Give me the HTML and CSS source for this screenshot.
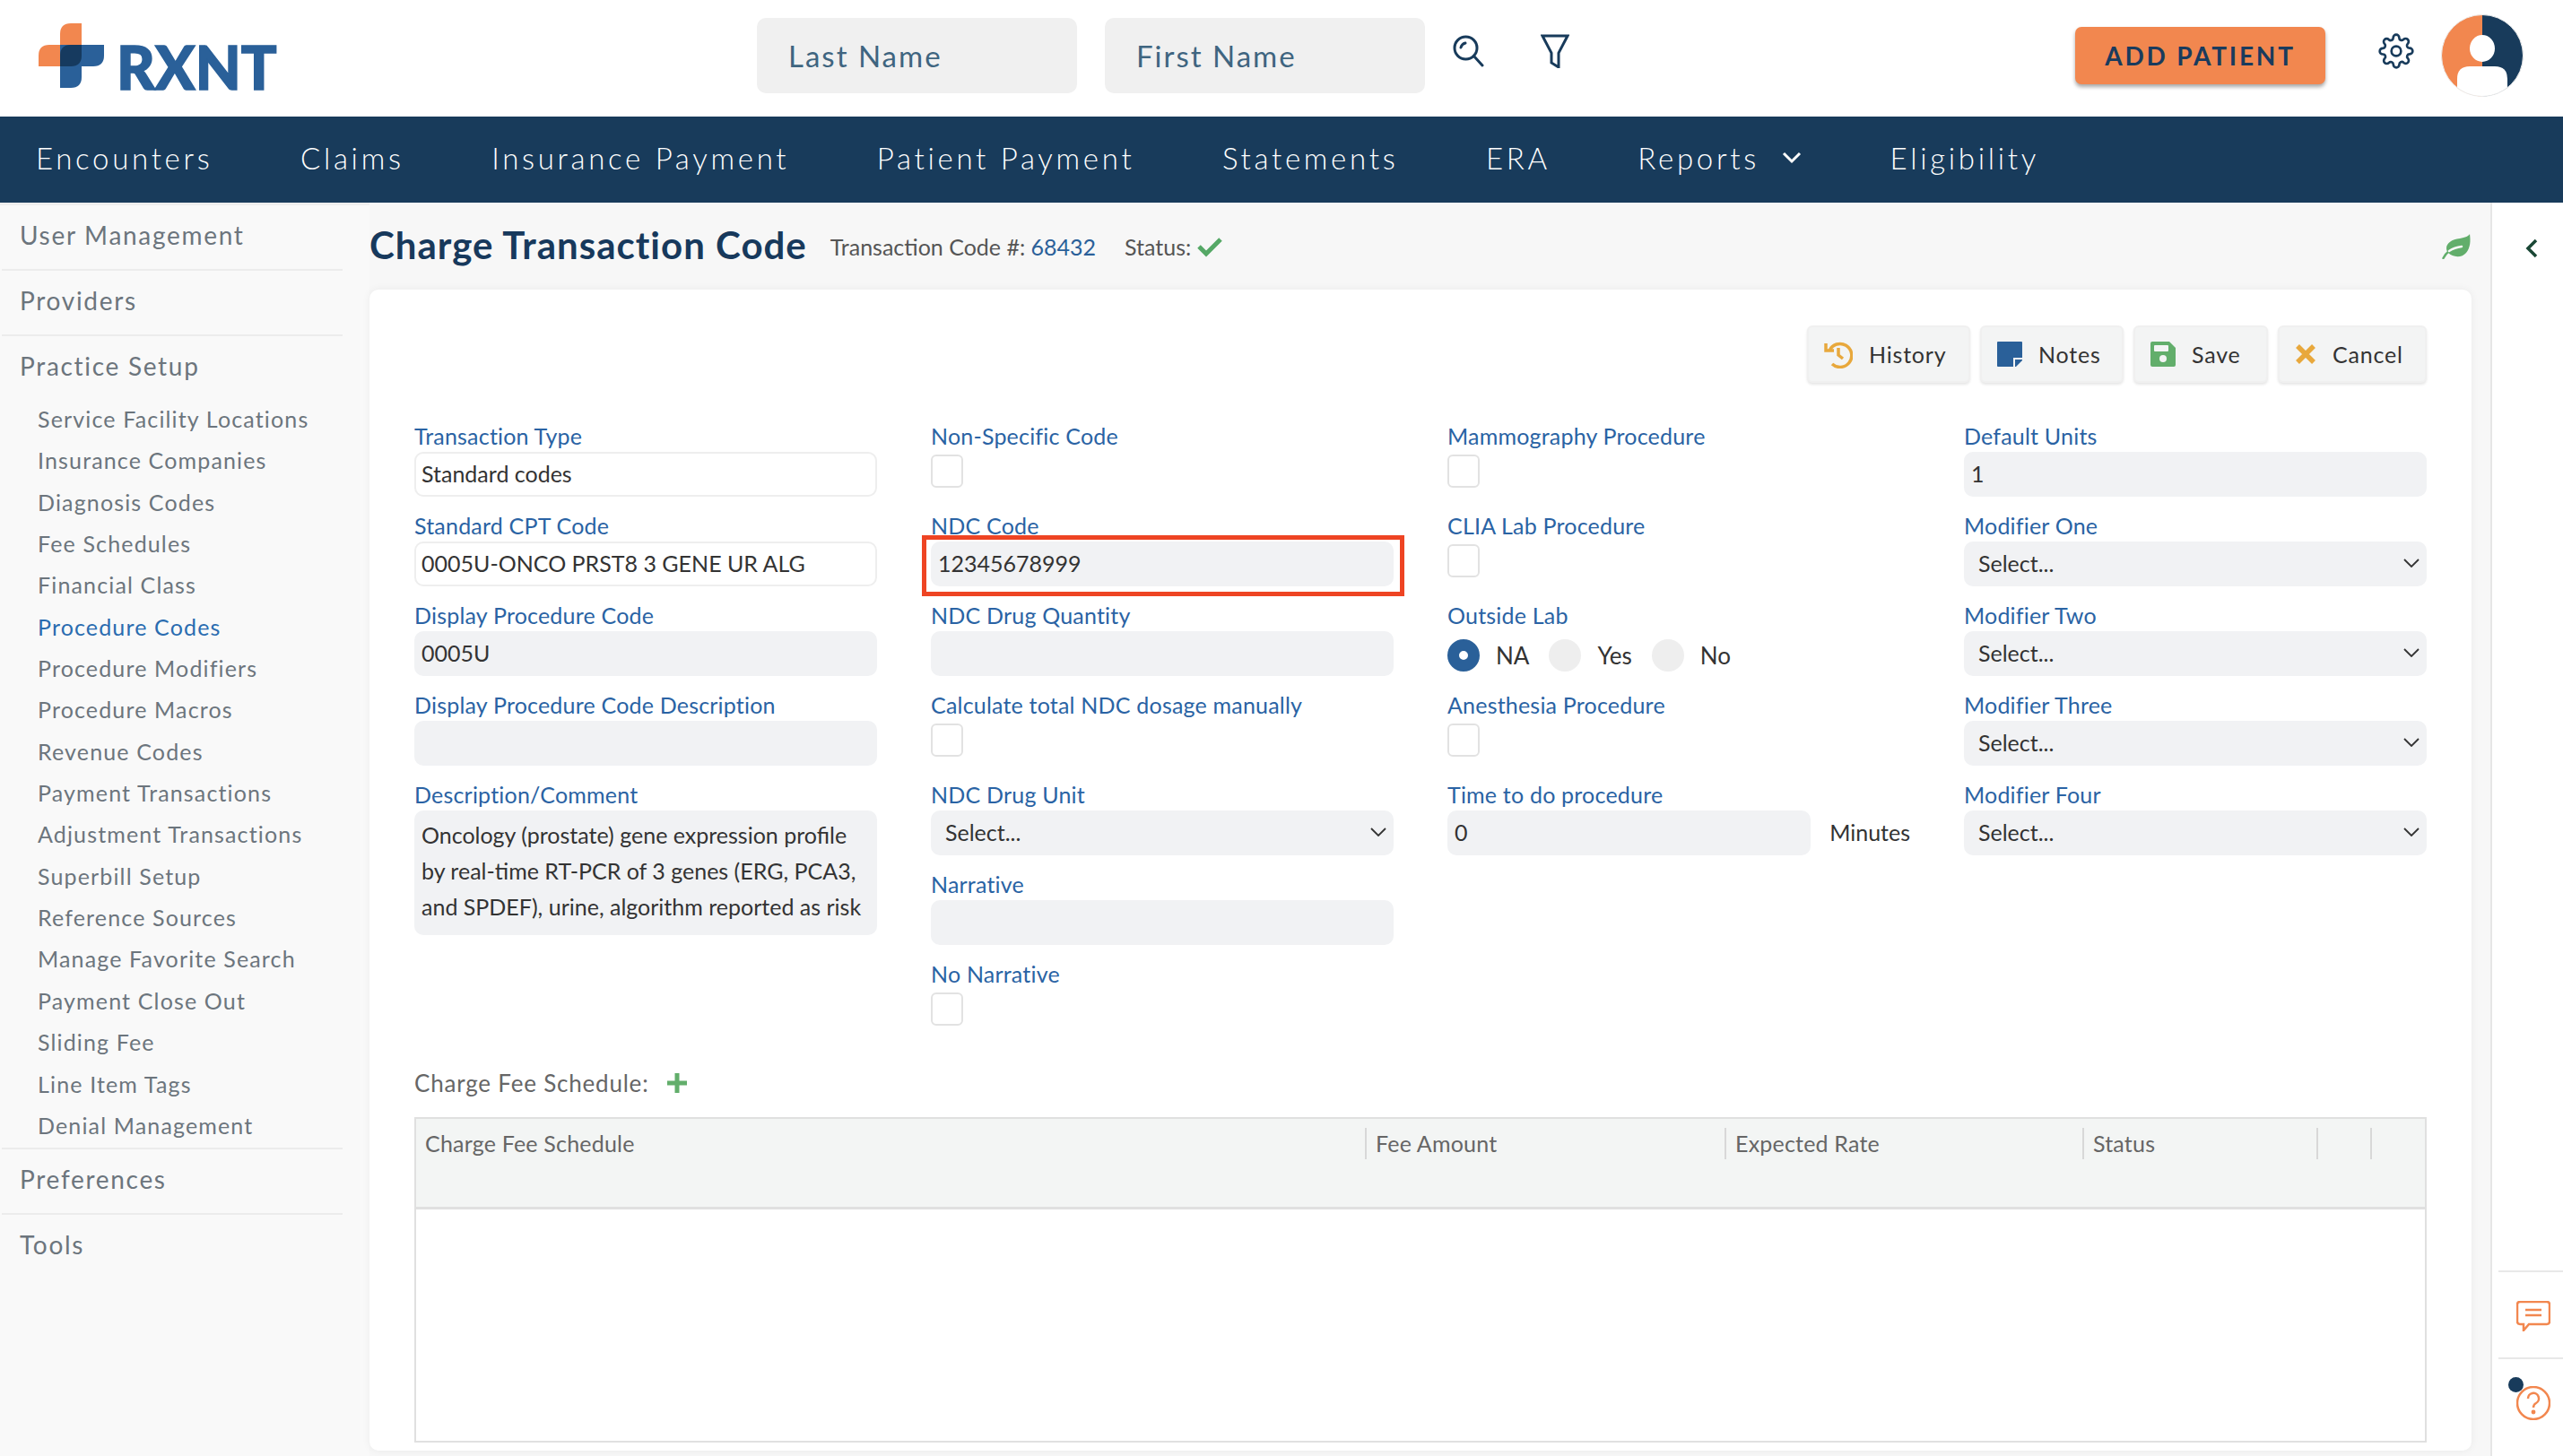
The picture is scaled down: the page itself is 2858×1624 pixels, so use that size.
FILE: index.html
```html
<!DOCTYPE html>
<html lang="en">
<head>
  <meta charset="UTF-8" />
  <title>Charge Transaction Code</title>
  <link rel="stylesheet" href="styles.css">
</head>
<body>
  <header class="topbar">
    <div class="logo">
      <svg class="logo-cross" viewBox="0 0 73 72" width="73" height="72">
        <path class="cross-orange" d="M24 48H0V36Q0 24 12 24H24V12Q24 0 36 0H48V36Q48 48 36 48Z"/>
        <path class="cross-blue" d="M24 24H73V36Q73 48 61 48H48V60Q48 72 36 72H24Z"/>
        <path class="cross-dark" d="M24 48V36Q24 24 36 24H48V36Q48 48 36 48Z"/>
      </svg>
      <span class="logo-text">RXNT</span>
    </div>
    <div class="search-field">Last Name</div>
    <div class="search-field">First Name</div>
    <svg class="icon-search" viewBox="0 0 35 36" width="35" height="36">
      <circle cx="14.500" cy="14.500" r="12.500"/>
      <path d="M23.500 23.500L33 34"/>
      <path d="M9 14Q10 10 14 9"/>
    </svg>
    <svg class="icon-filter" viewBox="0 0 32 38" width="32" height="38">
      <path d="M2 2H30L20 21V37L12 32V21Z"/>
    </svg>
    <button class="add-patient">ADD PATIENT</button>
    <svg class="icon-gear" viewBox="0 0 24 24" width="40" height="40">
      <circle cx="12" cy="12" r="3.200"/>
      <path d="M19.400 15a1.650 1.650 0 0 0 .33 1.820l.06.06a2 2 0 0 1 0 2.830 2 2 0 0 1-2.830 0l-.06-.06a1.650 1.650 0 0 0-1.820-.33 1.650 1.650 0 0 0-1 1.510V21a2 2 0 0 1-2 2 2 2 0 0 1-2-2v-.09A1.650 1.650 0 0 0 9 19.400a1.650 1.650 0 0 0-1.820.33l-.06.06a2 2 0 0 1-2.830 0 2 2 0 0 1 0-2.830l.06-.06a1.650 1.650 0 0 0 .33-1.820 1.650 1.650 0 0 0-1.510-1H3a2 2 0 0 1-2-2 2 2 0 0 1 2-2h.09A1.650 1.650 0 0 0 4.600 9a1.650 1.650 0 0 0-.33-1.820l-.06-.06a2 2 0 0 1 0-2.830 2 2 0 0 1 2.830 0l.06.06a1.650 1.650 0 0 0 1.820.33H9a1.650 1.650 0 0 0 1-1.510V3a2 2 0 0 1 2-2 2 2 0 0 1 2 2v.09a1.650 1.650 0 0 0 1 1.510 1.650 1.650 0 0 0 1.820-.33l.06-.06a2 2 0 0 1 2.830 0 2 2 0 0 1 0 2.830l-.06.06a1.650 1.650 0 0 0-.33 1.820V9a1.650 1.650 0 0 0 1.510 1H21a2 2 0 0 1 2 2 2 2 0 0 1-2 2h-.09a1.650 1.650 0 0 0-1.510 1z"/>
    </svg>
    <svg class="avatar" viewBox="0 0 92 92" width="92" height="92">
      <defs><clipPath id="avatarClip"><circle cx="46" cy="46" r="45.500"/></clipPath></defs>
      <g clip-path="url(#avatarClip)">
        <rect width="46" height="92" fill="#f2874f"/>
        <rect x="46" width="46" height="92" fill="#183b5b"/>
        <ellipse cx="46" cy="38" rx="14" ry="15" fill="#fff"/>
        <path d="M18 92V72Q18 58 32 58H60Q74 58 74 72V92Z" fill="#fff"/>
      </g>
      <circle cx="46" cy="46" r="45.500" fill="none" stroke="#ececec" stroke-width="1"/>
    </svg>
  </header>

  <nav class="mainnav">
    <a>Encounters</a>
    <a>Claims</a>
    <a>Insurance Payment</a>
    <a>Patient Payment</a>
    <a>Statements</a>
    <a>ERA</a>
    <a class="has-menu">Reports<svg viewBox="0 0 24 14" width="24" height="14"><path d="M3 2L12 11L21 2"/></svg></a>
    <a>Eligibility</a>
  </nav>

  <div class="workspace">
    <aside class="sidebar">
      <div class="side-group">User Management</div>
      <div class="side-group">Providers</div>
      <div class="side-group side-open">
        <div class="side-title">Practice Setup</div>
        <ul class="side-list">
          <li>Service Facility Locations</li>
          <li>Insurance Companies</li>
          <li>Diagnosis Codes</li>
          <li>Fee Schedules</li>
          <li>Financial Class</li>
          <li class="active">Procedure Codes</li>
          <li>Procedure Modifiers</li>
          <li>Procedure Macros</li>
          <li>Revenue Codes</li>
          <li>Payment Transactions</li>
          <li>Adjustment Transactions</li>
          <li>Superbill Setup</li>
          <li>Reference Sources</li>
          <li>Manage Favorite Search</li>
          <li>Payment Close Out</li>
          <li>Sliding Fee</li>
          <li>Line Item Tags</li>
          <li>Denial Management</li>
        </ul>
      </div>
      <div class="side-group">Preferences</div>
      <div class="side-group side-last">Tools</div>
    </aside>

    <main class="content">
      <div class="page-head">
        <h1>Charge Transaction Code</h1>
        <span class="meta">Transaction Code #: <b>68432</b></span>
        <span class="meta status">Status:
          <svg viewBox="0 0 30 24" width="30" height="24"><path d="M3 12L11 20L27 4"/></svg>
        </span>
        <svg class="icon-leaf" viewBox="0 0 32 28" width="32" height="28">
          <path class="leaf-body" d="M31 0C30 2 26 4 20 5C11 6 5 10 5 16C5 18 6 20 7 21C12 26 22 27 27 21C32 15 32 7 31 0Z"/>
          <path class="leaf-stem" d="M1.500 27Q4 22 8 19"/>
          <path class="leaf-vein" d="M8 19Q14 15 22 14"/>
        </svg>
      </div>

      <section class="card">
        <div class="actions">
          <button class="action action-history">
            <svg viewBox="0 0 32 32" width="32" height="32" class="stroke-amber"><path d="M6 12A13 13 0 1 1 9 27"/><path d="M2 4V12H11"/><path d="M16 9V17L21 21"/></svg>
            History
          </button>
          <button class="action action-notes">
            <svg viewBox="0 0 28 28" width="28" height="28"><path fill="#2a6099" d="M1 0H27Q28 0 28 1V18H18V28H1Q0 28 0 27V1Q0 0 1 0Z"/><path fill="#2a6099" d="M28 20V21L21 28H20V20Z"/></svg>
            Notes
          </button>
          <button class="action action-save">
            <svg viewBox="0 0 28 28" width="28" height="28"><path fill="#62ae6b" d="M2 0H21L28 7V26Q28 28 26 28H2Q0 28 0 26V2Q0 0 2 0Z"/><rect x="4" y="4" width="16" height="7" rx="1" fill="#f3f4f4"/><circle cx="14" cy="19" r="4" fill="#f3f4f4"/></svg>
            Save
          </button>
          <button class="action action-cancel">
            <svg viewBox="0 0 24 24" width="24" height="24" class="stroke-amber wide"><path d="M3 3L21 21M21 3L3 21"/></svg>
            Cancel
          </button>
        </div>

        <div class="form-grid">
          <div class="col">
            <div class="field"><label>Transaction Type</label><div class="control plain">Standard codes</div></div>
            <div class="field"><label>Standard CPT Code</label><div class="control plain">0005U-ONCO PRST8 3 GENE UR ALG</div></div>
            <div class="field"><label>Display Procedure Code</label><div class="control">0005U</div></div>
            <div class="field"><label>Display Procedure Code Description</label><div class="control"></div></div>
            <div class="field"><label>Description/Comment</label>
              <div class="control textarea">Oncology (prostate) gene expression profile by real-time RT-PCR of 3 genes (ERG, PCA3, and SPDEF), urine, algorithm reported as risk</div>
            </div>
          </div>

          <div class="col">
            <div class="field"><label>Non-Specific Code</label><div class="checkbox"></div></div>
            <div class="field marked"><label>NDC Code</label><div class="control">12345678999</div></div>
            <div class="field"><label>NDC Drug Quantity</label><div class="control"></div></div>
            <div class="field"><label>Calculate total NDC dosage manually</label><div class="checkbox"></div></div>
            <div class="field"><label>NDC Drug Unit</label>
              <div class="control select">Select...<svg viewBox="0 0 18 10" width="18" height="10"><path d="M1 1L9 9L17 1"/></svg></div>
            </div>
            <div class="field"><label>Narrative</label><div class="control"></div></div>
            <div class="field"><label>No Narrative</label><div class="checkbox"></div></div>
          </div>

          <div class="col">
            <div class="field"><label>Mammography Procedure</label><div class="checkbox"></div></div>
            <div class="field"><label>CLIA Lab Procedure</label><div class="checkbox"></div></div>
            <div class="field"><label>Outside Lab</label>
              <div class="radios">
                <span class="radio on"></span><span class="radio-text">NA</span>
                <span class="radio"></span><span class="radio-text">Yes</span>
                <span class="radio"></span><span class="radio-text">No</span>
              </div>
            </div>
            <div class="field"><label>Anesthesia Procedure</label><div class="checkbox"></div></div>
            <div class="field"><label>Time to do procedure</label>
              <div class="with-unit"><div class="control">0</div><span>Minutes</span></div>
            </div>
          </div>

          <div class="col">
            <div class="field"><label>Default Units</label><div class="control">1</div></div>
            <div class="field"><label>Modifier One</label>
              <div class="control select">Select...<svg viewBox="0 0 18 10" width="18" height="10"><path d="M1 1L9 9L17 1"/></svg></div>
            </div>
            <div class="field"><label>Modifier Two</label>
              <div class="control select">Select...<svg viewBox="0 0 18 10" width="18" height="10"><path d="M1 1L9 9L17 1"/></svg></div>
            </div>
            <div class="field"><label>Modifier Three</label>
              <div class="control select">Select...<svg viewBox="0 0 18 10" width="18" height="10"><path d="M1 1L9 9L17 1"/></svg></div>
            </div>
            <div class="field"><label>Modifier Four</label>
              <div class="control select">Select...<svg viewBox="0 0 18 10" width="18" height="10"><path d="M1 1L9 9L17 1"/></svg></div>
            </div>
          </div>
        </div>

        <div class="schedule-head">
          Charge Fee Schedule:
          <svg viewBox="0 0 26 26" width="26" height="26"><path d="M13 2V24M2 13H24"/></svg>
        </div>
        <div class="schedule">
          <div class="schedule-row">
            <div class="th first">Charge Fee Schedule</div>
            <div class="th">Fee Amount</div>
            <div class="th">Expected Rate</div>
            <div class="th">Status</div>
            <div class="th"></div>
            <div class="th"></div>
          </div>
        </div>
      </section>
    </main>

    <aside class="rail">
      <svg class="rail-back" viewBox="0 0 16 22" width="16" height="22"><path d="M13 2L4 11L13 20"/></svg>
      <div class="rail-bottom">
        <div class="rail-btn">
          <svg viewBox="0 0 38 34" width="38" height="34"><path d="M4 1H34Q37 1 37 4V23Q37 26 34 26H14L8 33V26H4Q1 26 1 23V4Q1 1 4 1Z"/><path d="M10 10H28M10 16H28"/></svg>
        </div>
        <div class="rail-btn help">
          <span class="help-dot"></span>
          <svg viewBox="0 0 38 38" width="38" height="38"><circle cx="19" cy="19" r="18"/><path d="M13 14a6 6 0 1 1 9 5c-2 1-3 2-3 5"/><circle class="dot" cx="19" cy="29" r="1.200"/></svg>
        </div>
      </div>
    </aside>
  </div>
</body>
</html>
```

FILE: styles.css
```css
* {
  margin: 0;
  padding: 0;
  box-sizing: border-box;
}

body {
  width: 2858px;
  height: 1624px;
  overflow: hidden;
  display: flex;
  flex-direction: column;
  font-family: "Lato", "Open Sans", sans-serif;
  color: #333;
  background: #f7f7f7;
}

svg { flex-shrink: 0; }

/* top bar */
.topbar {
  height: 130px;
  padding: 0 44px 6px 43px;
  display: flex;
  align-items: center;
  background: #fff;
}

.logo {
  display: flex;
  align-items: flex-end;
  gap: 14px;
  width: 266px;
  margin-right: 535px;
}

.cross-orange { fill: #f2874f; }
.cross-blue { fill: #2a6099; }
.cross-dark { fill: #163a5f; }

.logo-text {
  font-size: 66px;
  font-weight: 900;
  line-height: 46px;
  color: #2a6099;
  -webkit-text-stroke: 1.500px #2a6099;
}

.search-field {
  width: 357px;
  height: 84px;
  margin-right: 31px;
  padding-left: 35px;
  display: flex;
  align-items: center;
  font-size: 33px;
  letter-spacing: 2px;
  color: #3f6580;
  background: #f0f0f0;
  border-radius: 10px;
}

.icon-search,
.icon-filter,
.icon-gear {
  fill: none;
  stroke: #183b5b;
  stroke-width: 3;
  stroke-linecap: round;
  margin-bottom: 10px;
}

.icon-filter { margin-left: 63px; }

.icon-gear {
  stroke-width: 1.600;
  margin-left: 59px;
}

.add-patient {
  width: 279px;
  height: 64px;
  margin-left: auto;
  font: 700 28px "Lato", sans-serif;
  letter-spacing: 2.800px;
  color: #1a3b5d;
  background: #f2874f;
  border: none;
  border-radius: 7px;
  box-shadow: 0 3px 4px rgba(0, 0, 0, 0.35);
}

.avatar { margin-left: 30px; }

/* main nav */
.mainnav {
  height: 96px;
  padding: 0 0 4px 40px;
  display: flex;
  align-items: center;
  gap: 97.500px;
  background: #183b5b;
}

.mainnav a {
  display: flex;
  align-items: center;
  font-size: 33px;
  font-weight: 300;
  letter-spacing: 3.700px;
  color: #fff;
}

.has-menu svg {
  margin-left: 24px;
  fill: none;
  stroke: #fff;
  stroke-width: 3;
}

/* layout */
.workspace {
  flex: 1;
  min-height: 0;
  display: flex;
}

.sidebar {
  width: 412px;
  padding: 0 30px 0 2px;
  background: #f9f9f9;
  color: #6c757d;
  border-top: 3px solid #eee;
  background-clip: padding-box;
}

.side-group {
  height: 73px;
  padding-left: 20px;
  line-height: 67px;
  font-size: 28px;
  letter-spacing: 1.700px;
  border-bottom: 2px solid #ececec;
}

.side-open {
  height: auto;
  padding-left: 0;
}

.side-title {
  padding-left: 20px;
  height: 71px;
}

.side-last { border-bottom: none; }

.side-list {
  list-style: none;
  padding-left: 40px;
}

.side-list li {
  height: 46.350px;
  line-height: 43px;
  font-size: 25px;
  letter-spacing: 1.150px;
}

.side-list .active { color: #2a6cb0; }

.content {
  flex: 1;
  min-width: 0;
  display: flex;
  flex-direction: column;
  padding: 0 21px 6px 0;
}

.page-head {
  height: 97px;
  display: flex;
  align-items: center;
}

.page-head h1 {
  font-size: 42px;
  font-weight: 700;
  letter-spacing: 1px;
  color: #17395c;
  margin-right: 26px;
  padding-bottom: 3px;
}

.meta {
  font-size: 25px;
  color: #555;
  margin-right: 32px;
}

.meta b {
  font-weight: 400;
  color: #2a6099;
}

.status {
  display: flex;
  align-items: center;
  gap: 6px;
}

.status svg {
  fill: none;
  stroke: #55a866;
  stroke-width: 5;
}

.icon-leaf {
  margin: 0 1px 0 auto;
}

.leaf-body { fill: #62ae6b; }

.leaf-stem,
.leaf-vein {
  fill: none;
  stroke-linecap: round;
  stroke-width: 2.500;
}

.leaf-stem { stroke: #62ae6b; }
.leaf-vein { stroke: #f7f7f7; }

/* card */
.card {
  flex: 1;
  padding: 40px 50px 9px;
  background: #fff;
  border-radius: 10px;
  box-shadow: 0 0 10px rgba(0, 0, 0, 0.06);
}

.actions {
  display: flex;
  justify-content: flex-end;
  gap: 11px;
}

.action {
  height: 64px;
  padding-left: 17px;
  display: flex;
  align-items: center;
  gap: 18px;
  font: 400 25px "Lato", sans-serif;
  letter-spacing: 0.800px;
  color: #333;
  background: #f3f4f4;
  border: 2px solid #f0f0f0;
  border-radius: 6px;
  box-shadow: 0 2px 3px rgba(0, 0, 0, 0.1);
}

.action-history { width: 182px; }
.action-notes { width: 160px; }
.action-save { width: 150px; }
.action-cancel { width: 166px; }

.stroke-amber {
  fill: none;
  stroke: #e8a83c;
  stroke-width: 3.500;
}

.stroke-amber.wide { stroke-width: 5.500; }

.form-grid {
  display: grid;
  grid-template-columns: repeat(4, 516px);
  gap: 60px;
  margin-top: 45px;
}

.field {
  position: relative;
  height: 100px;
}

.field label {
  display: block;
  height: 32px;
  line-height: 28px;
  font-size: 25px;
  letter-spacing: 0.200px;
  color: #2a63a4;
}

.control {
  height: 50px;
  padding: 0 8px 2px;
  display: flex;
  align-items: center;
  font-size: 25px;
  color: #333;
  background: #f1f2f4;
  border-radius: 10px;
}

.control.plain {
  background: #fff;
  border: 2px solid #eee;
  padding: 0 6px 2px;
}

.textarea {
  height: 139px;
  padding: 7px 8px;
  display: block;
  line-height: 40px;
}

.select {
  justify-content: space-between;
  padding: 0 8px 2px 16px;
}

.select svg {
  fill: none;
  stroke: #333;
  stroke-width: 1.800;
}

.checkbox {
  width: 36px;
  height: 37px;
  margin-top: 3px;
  background: #fff;
  border: 2px solid #e2e2e2;
  border-radius: 6px;
}

.marked::after {
  content: "";
  position: absolute;
  top: 25px;
  left: -10px;
  right: -12px;
  bottom: 7px;
  border: 5px solid #ee4423;
}

.radios {
  display: flex;
  align-items: center;
  height: 50px;
  padding-top: 4px;
  font-size: 26px;
}

.radio {
  width: 36px;
  height: 36px;
  margin-right: 18px;
  background: #eee;
  border-radius: 50%;
}

.radio.on {
  background: #2a6099;
  border: 13px solid #2a6099;
  background-clip: padding-box;
  background-color: #fff;
}

.radio-text { margin-right: 22px; }

.with-unit {
  display: flex;
  align-items: center;
  gap: 21px;
  font-size: 25px;
}

.with-unit .control { width: 409px; }
.with-unit span { padding-bottom: 2px; }

/* fee schedule */
.schedule-head {
  height: 40px;
  margin: 16px 0 18px;
  display: flex;
  align-items: center;
  gap: 19px;
  font-size: 26px;
  letter-spacing: 0.800px;
  color: #666;
}

.schedule-head svg {
  fill: none;
  stroke: #62ae6b;
  stroke-width: 5;
}

.schedule {
  height: 363px;
  background: #fff;
  border: 2px solid #e0e0e0;
}

.schedule-row {
  height: 101px;
  display: grid;
  grid-template-columns: 1058px 401px 399px 261px 60px 61px;
  align-items: start;
  background: #f3f5f4;
  border-bottom: 3px solid #e0e0e0;
}

.th {
  height: 35px;
  margin-top: 10px;
  padding-left: 10px;
  line-height: 35px;
  font-size: 25px;
  letter-spacing: 0.200px;
  color: #666;
  border-left: 2px solid #d8d8d8;
}

.th.first { border-left: none; }

/* right rail */
.rail {
  width: 81px;
  display: flex;
  flex-direction: column;
  justify-content: space-between;
  background: #fff;
  border-left: 2px solid #e6e6e6;
}

.rail-back {
  margin: 40px 0 0 36px;
  fill: none;
  stroke: #1a4735;
  stroke-width: 3.500;
}

.rail-bottom { margin-left: 7px; }

.rail-btn {
  position: relative;
  height: 97px;
  padding: 32px 0 0 20px;
  border-top: 2px solid #e8e8e8;
}

.rail-btn.help {
  height: 110px;
  padding-top: 30px;
}

.rail-btn svg {
  fill: none;
  stroke: #f2874f;
  stroke-width: 2.500;
}

.rail-btn .dot { fill: #f2874f; }

.help-dot {
  position: absolute;
  top: 20px;
  left: 11px;
  width: 17px;
  height: 17px;
  background: #183b5b;
  border-radius: 50%;
}
```
